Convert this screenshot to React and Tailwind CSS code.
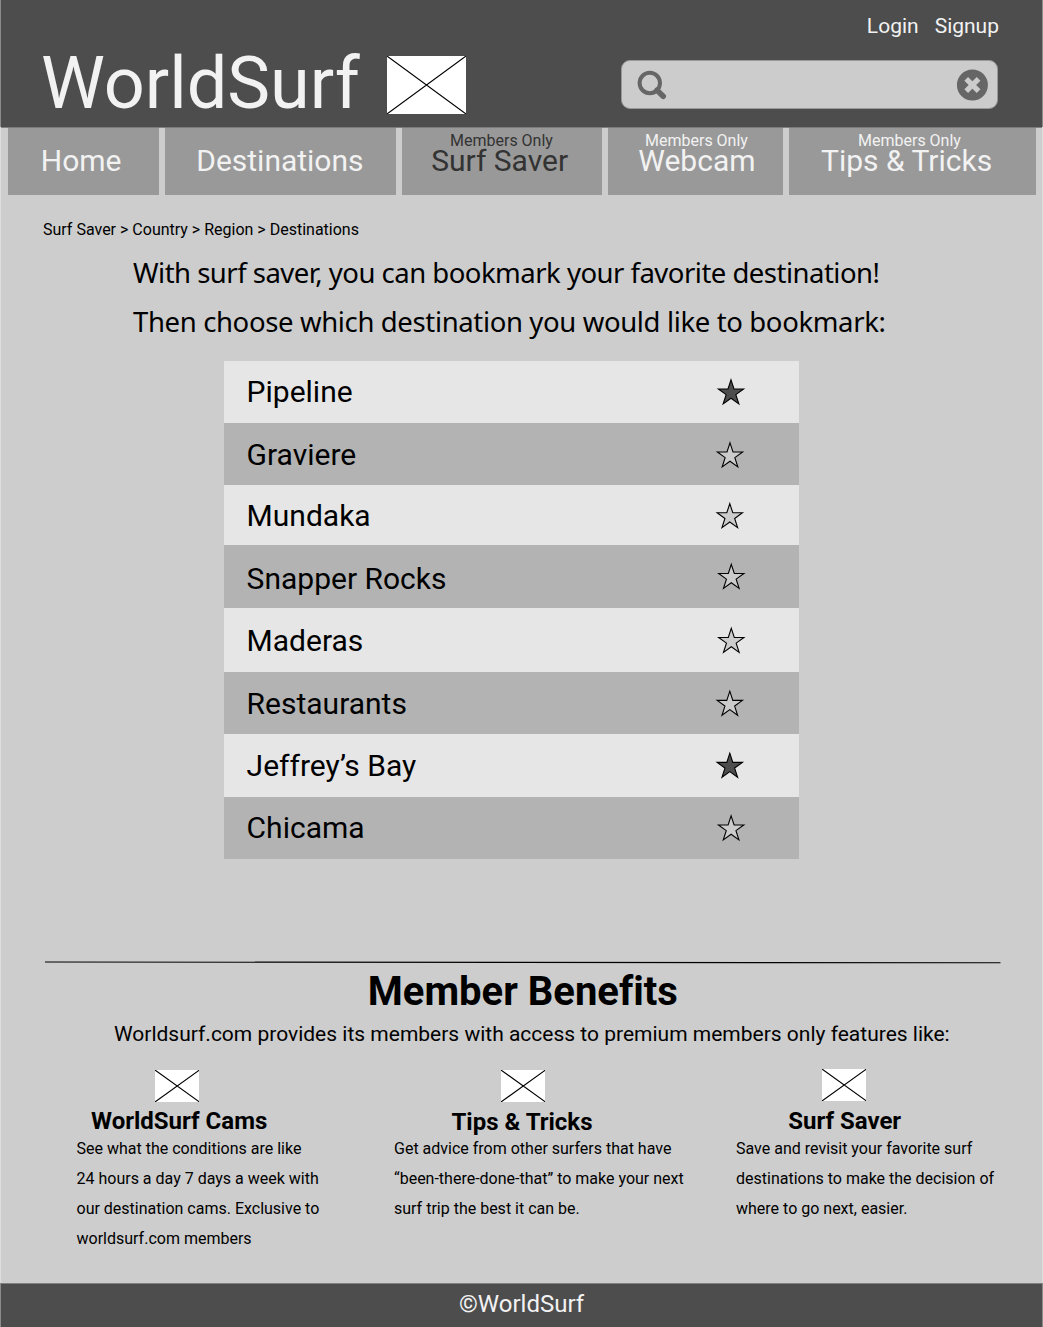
import React from "react";

const navItems = [
  { label: "Home", tile: "w-[151px]", pad: "pl-[32.8px]", members: false },
  { label: "Destinations", tile: "w-[231px]", pad: "pl-[31.2px]", members: false },
  { label: "Surf Saver", tile: "w-[200px]", pad: "pl-[29.2px]", membersPad: "pl-12", members: true, active: true },
  { label: "Webcam", tile: "w-[175px]", pad: "pl-[30.3px]", membersPad: "pl-[37px]", members: true },
  { label: "Tips & Tricks", tile: "w-[247px]", pad: "pl-8", membersPad: "pl-[69px]", members: true },
];

const destinations = [
  { name: "Pipeline", row: "h-[62px] pt-[13px]", pad: 13, star: [20, 32.1], saved: true },
  { name: "Graviere", row: "h-[62px] pt-[14px]", pad: 14, star: [19, 33.1] },
  { name: "Mundaka", row: "h-[60px] pt-[13px]", pad: 13, star: [18.8, 31.9] },
  { name: "Snapper Rocks", row: "h-[63px] pt-[16px]", pad: 16, star: [20.3, 32.6] },
  { name: "Maderas", row: "h-[64px] pt-[15px]", pad: 15, star: [20.3, 33.6] },
  { name: "Restaurants", row: "h-[62px] pt-[14px]", pad: 14, star: [18.8, 32.5] },
  { name: "Jeffrey’s Bay", row: "h-[63px] pt-[14px]", pad: 14, star: [18.8, 32.5], saved: true },
  { name: "Chicama", row: "h-[62px] pt-[13px]", pad: 13, star: [20.1, 32.1] },
];

const benefits = [
  {
    title: "WorldSurf Cams",
    column: "w-[317.5px]",
    image: "ml-[78px]",
    heading: "ml-[14.5px] mt-[5px]",
    body: "mt-[-1px]",
    lines: [
      "See what the conditions are like",
      "24 hours a day 7 days a week with",
      "our destination cams. Exclusive to",
      "worldsurf.com members",
    ],
  },
  {
    title: "Tips & Tricks",
    column: "w-[342px]",
    image: "ml-[106.5px]",
    heading: "ml-[57.5px] mt-[6px]",
    body: "mt-[-2px]",
    lines: [
      "Get advice from other surfers that have",
      "“been-there-done-that” to make your next",
      "surf trip the best it can be.",
    ],
  },
  {
    title: "Surf Saver",
    column: "w-[300px] -mt-px",
    image: "ml-[85.5px]",
    heading: "ml-[52.2px] mt-[6px]",
    body: "mt-[-1px]",
    lines: [
      "Save and revisit your favorite surf",
      "destinations to make the decision of",
      "where to go next, easier.",
    ],
  },
];

function Placeholder({ className, width, height }) {
  return (
    <svg className={className} width={width} height={height} viewBox={`0 0 ${width} ${height}`}>
      <rect width={width} height={height} fill="#fff" />
      <path d={`M0 0L${width} ${height}M${width} 0L0 ${height}`} stroke="#000" strokeWidth="1.1" />
    </svg>
  );
}

const starPoints = Array.from({ length: 10 }, (_, i) => {
  const r = i % 2 ? 5.1 : 13.3;
  const a = (Math.PI / 5) * i;
  return `${(r * Math.sin(a)).toFixed(2)},${(-r * Math.cos(a)).toFixed(2)}`;
}).join(" ");

function Star({ row }) {
  const [x, y] = row.star;
  return (
    <svg className="mr-[48px] shrink-0" width="40" height="48" viewBox={`0 ${row.pad} 40 48`}>
      <polygon
        points={starPoints}
        transform={`translate(${x} ${y})`}
        fill={row.saved ? "#4d4d4d" : "#ccc"}
        stroke="#000"
        strokeWidth="1.1"
      />
    </svg>
  );
}

function Header() {
  return (
    <header className="flex h-[127px] justify-between border-x border-white/35 bg-[#4d4d4d] text-[#f2f2f2]">
      <div className="flex pl-[40px]">
        <h1 className="mt-[41px] h-[85px] w-[318.8px] whitespace-nowrap text-[72px] leading-[85px]">WorldSurf</h1>
        <Placeholder className="ml-[27.2px] mt-14" width={79} height={58} />
      </div>
      <div className="mr-11 w-[377px]">
        <div className="-mr-px mt-[14px] flex h-6 justify-end gap-4 text-[21px] leading-6">
          <a>Login</a>
          <a>Signup</a>
        </div>
        <div className="mt-[22px] flex h-[49px] items-center justify-between rounded-[9px] border border-[#999] bg-[#ccc] pl-[14px] pr-[9px]">
          <svg width="32" height="32" viewBox="0 0 32 32" fill="none" stroke="#666">
            <circle cx="13.8" cy="14" r="10.2" strokeWidth="4" />
            <path d="M21 21.2L27.2 27.2" strokeWidth="5.6" strokeLinecap="round" />
          </svg>
          <svg width="32" height="32" viewBox="0 0 32 32">
            <circle cx="16.4" cy="16" r="15.5" fill="#666" />
            <path d="M10.2 9.8L22.6 22.2M22.6 9.8L10.2 22.2" stroke="#ccc" strokeWidth="5.2" />
          </svg>
        </div>
      </div>
    </header>
  );
}

function Nav() {
  return (
    <nav className="flex h-[68px] gap-1.5 border-t border-[#808080] pl-[7px]">
      {navItems.map((item) => (
        <a
          key={item.label}
          className={`-mt-px block h-[68px] shrink-0 whitespace-nowrap border-t border-[#7b7b7b] bg-[#999] ${item.tile} ${item.active ? "text-[#333]" : "text-[#f2f2f2]"}`}
        >
          <div className={`mt-[3px] h-[19px] text-base leading-[19px] ${item.membersPad || ""}`}>
            {item.members ? "Members Only" : ""}
          </div>
          <div className={`-mt-[7px] h-[35px] text-[30px] leading-[35px] ${item.pad}`}>{item.label}</div>
        </a>
      ))}
    </nav>
  );
}

export default function App() {
  return (
    <div className="h-[1327px] w-[1043px] overflow-hidden bg-[#cdcdcd] font-['Roboto',sans-serif] text-black">
      <Header />
      <main className="h-[1156px] border-x border-white/35">
        <Nav />
        <p className="ml-[42px] mt-[25px] h-[19px] whitespace-nowrap text-base leading-[19px]">
          Surf Saver &gt; Country &gt; Region &gt; Destinations
        </p>
        <div className="ml-[132px] mt-[15px] whitespace-nowrap font-['Noto_Sans',sans-serif] text-[27.5px] leading-[37px]">
          <p className="tracking-[-0.51px]">With surf saver, you can bookmark your favorite destination!</p>
          <p className="mt-3 tracking-[-0.36px]">Then choose which destination you would like to bookmark:</p>
        </div>
        <ul className="ml-[223px] mt-[21px] w-[575px] text-[30px] leading-[35px]">
          {destinations.map((row, i) => (
            <li
              key={row.name}
              className={`flex items-start justify-between overflow-hidden pl-[22.6px] ${row.row} ${i % 2 ? "bg-[#b3b3b3]" : "bg-[#e6e6e6]"}`}
            >
              <span>{row.name}</span>
              <Star row={row} />
            </li>
          ))}
        </ul>
        <section>
          <svg className="ml-11 mt-[101px] block" width="956" height="6" viewBox="0 0 956 6">
            <path d="M0 2L955.5 2.8" stroke="#000" strokeWidth="1.1" />
          </svg>
          <h2 className="ml-[366.8px] mt-[2px] h-[47px] whitespace-nowrap text-[40px] font-bold leading-[47px] [font-variant-ligatures:none]">
            Member Benefits
          </h2>
          <p className="ml-[113px] mt-[7px] h-6 whitespace-nowrap text-[21px] leading-6">
            Worldsurf.com provides its members with access to premium members only features like:
          </p>
          <div className="ml-[75.5px] mt-6 flex items-start">
            {benefits.map((item) => (
              <article key={item.title} className={`shrink-0 whitespace-nowrap ${item.column}`}>
                <Placeholder className={`block ${item.image}`} width={44.5} height={32} />
                <h3 className={`h-7 text-2xl font-bold leading-7 ${item.heading}`}>{item.title}</h3>
                <p className={`text-base leading-[30px] ${item.body}`}>
                  {item.lines.map((line) => (
                    <span key={line} className="block">{line}</span>
                  ))}
                </p>
              </article>
            ))}
          </div>
        </section>
      </main>
      <footer className="h-11 border-x border-t border-x-white/35 border-t-[#808080] bg-[#4d4d4d] pl-[458px] pt-[6px] text-2xl leading-7 text-[#f2f2f2]">
        ©WorldSurf
      </footer>
    </div>
  );
}
